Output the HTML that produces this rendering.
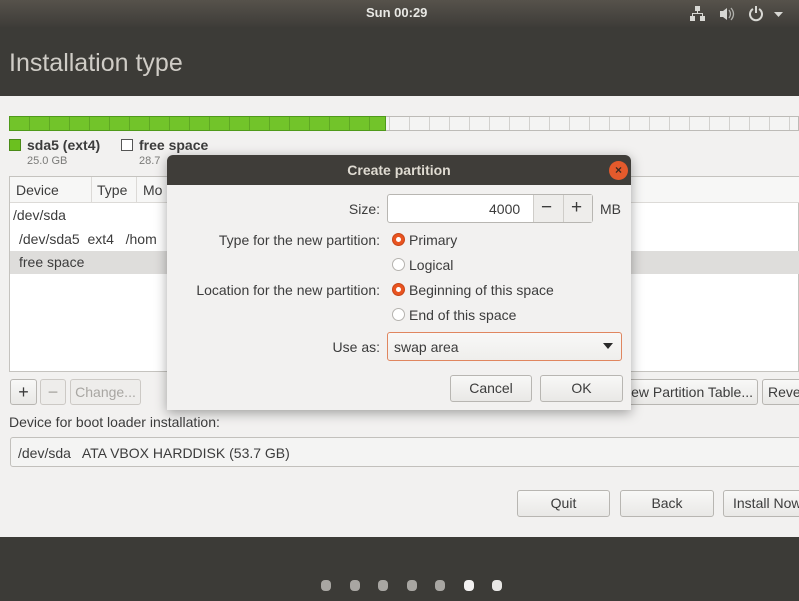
<!DOCTYPE html>
<html><head><style>
*{box-sizing:border-box;margin:0;padding:0}
body{width:799px;height:601px;overflow:hidden;background:#f2f1f0;font-family:"Liberation Sans",sans-serif;font-size:14px;color:#3c3c3c;position:relative}
.a{position:absolute}
.lab{position:absolute;right:419px;text-align:right;white-space:nowrap}
.btn{position:absolute;border:1px solid #b8b6b2;border-radius:3px;background:linear-gradient(#f8f8f7,#e9e8e6);text-align:center;color:#3c3c3c;font-size:14px}
.dis{color:#a8a6a2;border-color:#ccc9c5;background:#eeedeb}
.radio{position:absolute;width:13px;height:13px;border-radius:50%;border:1px solid #b5b3af;background:#fff}
.radio.on{background:#e95420;border-color:#c7461a}
.radio.on:after{content:"";position:absolute;left:3px;top:3px;width:5px;height:5px;border-radius:50%;background:#fff}
.dot{position:absolute;top:580px;width:10px;height:11px;border-radius:4px;background:#a8a6a2}
</style></head><body>
<div class="a" style="left:0;top:0;width:799px;height:96px;background:linear-gradient(#56524b 0px,#3f3d39 26px,#3c3b37 27px,#3c3b37 96px)"></div>
<div class="a" style="left:366px;top:5px;color:#e8e8e4;font-weight:bold;font-size:13px">Sun 00:29</div>
<svg class="a" style="left:690px;top:5px" width="100" height="18" viewBox="0 0 100 18">
<g fill="#d8d8d4"><rect x="5" y="1" width="5" height="5"/><rect x="7" y="6" width="1" height="3"/><rect x="2" y="8" width="11" height="1"/><rect x="2" y="8" width="1" height="4"/><rect x="12" y="8" width="1" height="4"/><rect x="0" y="11" width="5" height="5"/><rect x="10" y="11" width="5" height="5"/>
<path d="M30 6h3l4-3v12l-4-3h-3z"/></g>
<path d="M39 5q3 4 0 8M41 3q5 6 0 12" stroke="#b0b0ac" stroke-width="1.3" fill="none"/>
<path d="M63 4a6 6 0 1 0 6 0" stroke="#d8d8d4" stroke-width="2" fill="none"/><rect x="65" y="1" width="2" height="7" fill="#d8d8d4"/>
<path d="M84 7h9l-4.5 5z" fill="#d8d8d4"/></svg>
<div class="a" style="left:9px;top:49px;font-size:25px;color:#cfccc6">Installation type</div>

<div class="a" style="left:9px;top:116px;width:790px;height:15px;border:1px solid #bdbbb7;background:repeating-linear-gradient(90deg,#f4f4f3 0 19px,#d2d1ce 19px 20px)"></div>
<div class="a" style="left:9px;top:116px;width:377px;height:15px;background:repeating-linear-gradient(90deg,#72c42a 0 19px,#5fa823 19px 20px);border:1px solid #4f9a1a"></div>
<div class="a" style="left:9px;top:139px;width:12px;height:12px;background:#6bc01f;border:1px solid #4a8a18"></div>
<div class="a" style="left:27px;top:137px;font-weight:bold;font-size:14px;color:#3c3c3c">sda5 (ext4)</div>
<div class="a" style="left:27px;top:155px;font-size:11px;color:#7a7a78">25.0 GB</div>
<div class="a" style="left:121px;top:139px;width:12px;height:12px;border:1px solid #555;background:#fff"></div>
<div class="a" style="left:139px;top:137px;font-weight:bold;font-size:14px">free space</div>
<div class="a" style="left:139px;top:155px;font-size:11px;color:#7a7a78">28.7</div>

<div class="a" style="left:9px;top:176px;width:790px;height:196px;border:1px solid #c5c3bf;background:#fff"></div>
<div class="a" style="left:10px;top:177px;width:789px;height:26px;background:#f7f7f6;border-bottom:1px solid #dcdad7"></div>
<div class="a" style="left:91px;top:177px;width:1px;height:26px;background:#dcdad7"></div>
<div class="a" style="left:136px;top:177px;width:1px;height:26px;background:#dcdad7"></div>
<div class="a" style="left:16px;top:182px">Device</div><div class="a" style="left:97px;top:182px">Type</div><div class="a" style="left:143px;top:182px">Mo</div>
<div class="a" style="left:13px;top:207px">/dev/sda</div>
<div class="a" style="left:19px;top:231px">/dev/sda5&nbsp; ext4&nbsp;&nbsp; /hom</div>
<div class="a" style="left:10px;top:251px;width:789px;height:23px;background:#dedddb"></div>
<div class="a" style="left:19px;top:254px">free space</div>

<div class="btn" style="left:10px;top:379px;width:27px;height:26px;line-height:24px;font-size:18px">+</div>
<div class="btn dis" style="left:40px;top:379px;width:26px;height:26px;line-height:24px;font-size:18px">−</div>
<div class="btn dis" style="left:70px;top:379px;width:71px;height:26px;line-height:24px">Change...</div>
<div class="btn" style="left:600px;top:379px;width:158px;height:26px;line-height:24px;text-align:right;padding-right:4px">New Partition Table...</div>
<div class="btn" style="left:762px;top:379px;width:60px;height:26px;line-height:24px;text-align:left;padding-left:5px">Revert</div>

<div class="a" style="left:9px;top:414px">Device for boot loader installation:</div>
<div class="a" style="left:10px;top:437px;width:800px;height:30px;border:1px solid #c2c0bc;border-radius:3px;background:#f4f4f3;padding:7px 7px;white-space:pre">/dev/sda   ATA VBOX HARDDISK (53.7 GB)</div>

<div class="btn" style="left:517px;top:490px;width:93px;height:27px;line-height:25px">Quit</div>
<div class="btn" style="left:620px;top:490px;width:94px;height:27px;line-height:25px">Back</div>
<div class="btn" style="left:723px;top:490px;width:100px;height:27px;line-height:25px;text-align:left;padding-left:9px">Install Now</div>

<div class="a" style="left:0;top:537px;width:799px;height:64px;background:#3c3b37"></div>
<div class="dot" style="left:321px"></div><div class="dot" style="left:350px"></div><div class="dot" style="left:378px"></div><div class="dot" style="left:407px"></div><div class="dot" style="left:435px"></div><div class="dot" style="left:464px;background:#f2f1f0"></div><div class="dot" style="left:492px;background:#e8e7e5"></div>

<div class="a" style="left:167px;top:155px;width:464px;height:255px;background:#f2f1f0;border-radius:6px 6px 0 0;box-shadow:0 3px 12px rgba(0,0,0,.35);overflow:hidden">
<div style="height:30px;background:#3f3d39;color:#dfdbd2;font-weight:bold;text-align:center;line-height:30px;font-size:14px">Create partition</div>
</div>
<div class="a" style="left:609px;top:161px;width:19px;height:19px;border-radius:50%;background:#e45a2c;color:#3a2a22;font-size:12px;text-align:center;line-height:18px;font-weight:bold">×</div>
<div class="lab" style="top:201px">Size:</div>
<div class="a" style="left:387px;top:194px;width:206px;height:29px;border:1px solid #b8b6b2;border-radius:3px;background:#fff"></div>
<div class="a" style="left:533px;top:195px;width:59px;height:27px;background:#eeedeb;border-left:1px solid #cfcdc9"></div>
<div class="a" style="left:563px;top:195px;width:1px;height:27px;background:#cfcdc9"></div>
<div class="a" style="left:489px;top:201px">4000</div>
<div class="a" style="left:541px;top:197px;font-size:19px">−</div>
<div class="a" style="left:571px;top:197px;font-size:19px">+</div>
<div class="a" style="left:600px;top:201px">MB</div>
<div class="lab" style="top:232px">Type for the new partition:</div>
<div class="radio on" style="left:392px;top:233px"></div><div class="a" style="left:409px;top:232px">Primary</div>
<div class="radio" style="left:392px;top:258px"></div><div class="a" style="left:409px;top:257px">Logical</div>
<div class="lab" style="top:282px">Location for the new partition:</div>
<div class="radio on" style="left:392px;top:283px"></div><div class="a" style="left:409px;top:282px">Beginning of this space</div>
<div class="radio" style="left:392px;top:308px"></div><div class="a" style="left:409px;top:307px">End of this space</div>
<div class="lab" style="top:339px">Use as:</div>
<div class="a" style="left:387px;top:332px;width:235px;height:29px;border:1px solid #e0865f;border-radius:3px;background:linear-gradient(#f8f8f7,#efeeec);padding:6px 6px">swap area</div>
<svg class="a" style="left:603px;top:343px" width="10" height="6"><path d="M0 0h10l-5 6z" fill="#2a2a2a"/></svg>
<div class="btn" style="left:450px;top:375px;width:82px;height:27px;line-height:25px">Cancel</div>
<div class="btn" style="left:540px;top:375px;width:83px;height:27px;line-height:25px">OK</div>
</body></html>
